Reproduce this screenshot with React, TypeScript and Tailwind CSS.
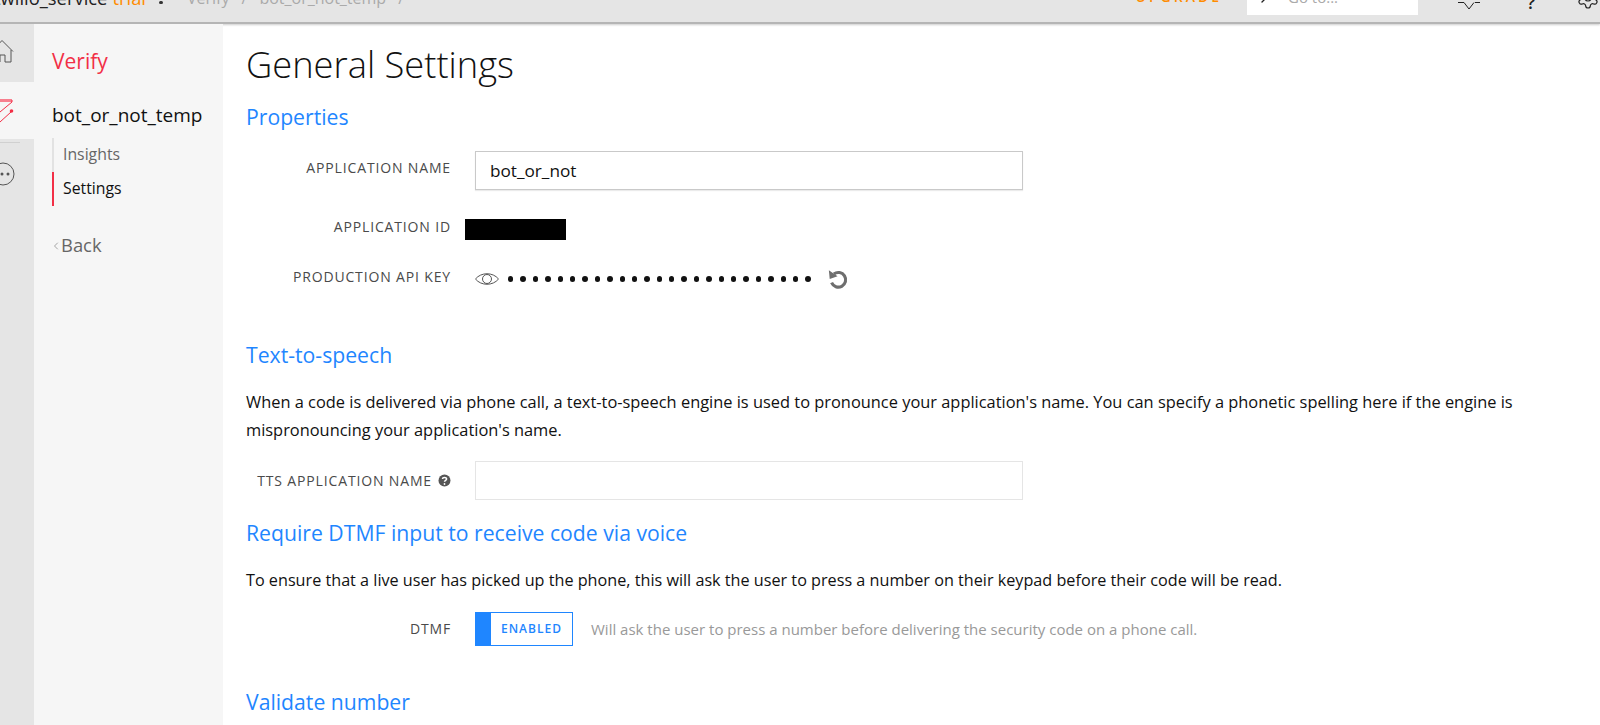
import { ChevronLeft, ChevronRight, Settings } from "lucide-react";

const font = "font-['Open_Sans',sans-serif]";

function FieldLabel({ children, raised }: { children: React.ReactNode; raised?: boolean }) {
  return (
    <div className={`w-[451px] shrink-0 text-right text-[14px] leading-[18px] tracking-[0.85px] text-[#4a4a4a] uppercase ${raised ? "-mt-[5px]" : ""}`}>
      {children}
    </div>
  );
}

function SectionTitle({ children, className }: { children: React.ReactNode; className: string }) {
  return <h2 className={`text-[21.2px] leading-[28px] text-[#1f86ff] ${className}`}>{children}</h2>;
}

export default function App() {
  return (
    <div className={`${font} flex h-[725px] w-[1600px] flex-col overflow-hidden bg-white text-black`}>
      {/* Top bar, cut off by the screenshot */}
      <header className="flex h-[24px] shrink-0 items-start overflow-hidden border-b-[2px] border-[#b5b5b5] bg-[#e5e5e5] shadow-[0_1px_2px_rgba(0,0,0,0.2)]">
        <span className="-mt-[14px] -ml-[6px] text-[18.4px] leading-[24px] text-[#222]">twilio_service</span>
        <span className="-mt-[14px] ml-[5px] text-[18.4px] leading-[24px] text-[#ff8c00]">trial</span>
        <span className="mt-[1px] ml-[13px] h-[3px] w-[4px] rounded-full bg-[#333]" />
        <span className="-mt-[14px] ml-[24px] text-[16px] leading-[24px] text-[#aaa]">Verify</span>
        <span className="-mt-[14px] ml-[12px] text-[16px] leading-[24px] text-[#aaa]">/</span>
        <span className="-mt-[14px] ml-[12px] text-[16px] leading-[24px] text-[#aaa]">bot_or_not_temp</span>
        <span className="-mt-[14px] ml-[12px] text-[16px] leading-[24px] text-[#aaa]">/</span>
        <span className="-mt-[15px] ml-auto text-[14px] leading-[24px] font-semibold tracking-[3px] text-[#ff8c00]">UPGRADE</span>
        <div className="ml-[25px] flex h-[15px] w-[171px] shrink-0 items-start overflow-hidden bg-white pl-[9px]">
          <ChevronRight className="-mt-[10px] h-4 w-4 text-[#222]" />
          <span className="-mt-[15px] ml-[16px] text-[15px] leading-[24px] text-[#aaa]">Go to...</span>
        </div>
        <svg className="ml-[39px] h-[12px] w-[24px] shrink-0" viewBox="0 0 24 12" fill="none" stroke="#222" strokeWidth="1">
          <path d="M1 2.5h6M18 2.5h5M7 2.5l5 6.5 5-6.5" />
        </svg>
        <span className="-mt-[10px] ml-[46px] w-[10px] shrink-0 text-[18px] leading-[24px] font-semibold text-[#222]">?</span>
        <Settings className="-mt-[14px] ml-[39px] h-[24px] w-[24px] shrink-0 text-[#222]" strokeWidth={1.2} />
      </header>

      <div className="flex min-h-0 flex-1">
        {/* Icon rail */}
        <nav className="flex w-[34px] shrink-0 flex-col bg-[#e5e5e5]">
          <div className="h-[58px] overflow-hidden">
            <svg className="mt-[15px] h-[26px] w-[16px]" viewBox="0 0 16 26" fill="none" stroke="#555" strokeWidth="1">
              <path d="M-8 12L2 1.5L13 12.5M11 11V23H5V16H0V23" />
            </svg>
          </div>
          <div className="h-[57px] overflow-hidden bg-[#f6f6f6]">
            <svg className="mt-[17px] h-[26px] w-[16px]" viewBox="0 0 16 26" fill="none" stroke="#f22f46" strokeWidth="1">
              <path d="M0 1.5H12" stroke="#f77f8e" strokeWidth="3" />
              <path d="M12 1V3L0 13" />
              <path d="M11 13L0 23" />
              <circle cx="11.5" cy="12" r="1.8" fill="#f22f46" stroke="none" />
            </svg>
          </div>
          <div className="mt-[3px] h-px w-[20px] bg-[#d0d0d0]" />
          <svg className="mt-[18px] h-[26px] w-[15px]" viewBox="0 0 15 26" fill="none" stroke="#555" strokeWidth="1">
            <circle cx="3" cy="13" r="11" />
            <circle cx="2" cy="13" r="1.5" fill="#555" stroke="none" />
            <circle cx="8" cy="13" r="1.5" fill="#555" stroke="none" />
          </svg>
        </nav>

        {/* Product sidebar */}
        <aside className="w-[189px] shrink-0 bg-[#f6f6f6] pl-[18px]">
          <div className="mt-[21px] text-[21px] leading-[32px] text-[#f22f46]">Verify</div>
          <div className="mt-[25px] text-[19px] leading-[26px] text-[#111]">bot_or_not_temp</div>
          <div className="mt-[10px] w-[120px]">
            <div className="flex h-[34px] items-center border-l-2 border-[#e2e2e2] pl-[9px] text-[15.8px] text-[#666]">Insights</div>
            <div className="flex h-[34px] items-center border-l-2 border-[#f22f46] pl-[9px] text-[15.8px] text-[#111]">Settings</div>
          </div>
          <div className="mt-[25px] flex items-center text-[#666]">
            <ChevronLeft className="-ml-[2px] mt-[2px] h-[12px] w-[12px] text-[#888]" strokeWidth={1.5} />
            <span className="-ml-[1px] text-[18.4px] leading-[28px]">Back</span>
          </div>
        </aside>

        {/* Page content */}
        <main className="min-w-0 flex-1 -ml-[223px]">
          <div className="pl-[246px]">
            <h1 className="mt-[15px] text-[36.3px] leading-[50px] font-light text-[#111]">General Settings</h1>
            <SectionTitle className="mt-[14px]">Properties</SectionTitle>
          </div>

          <div>
            <div className="mt-[20px] flex items-center">
              <FieldLabel raised>Application Name</FieldLabel>
              <div className="ml-[24px] flex h-[39px] w-[548px] items-center border border-[#c9c9c9] pl-[14px] text-[17.2px] text-[#111] shadow-[0_1px_1px_rgba(0,0,0,0.08)]">
                bot_or_not
              </div>
            </div>
            <div className="mt-[29px] flex h-[21px] items-center">
              <FieldLabel raised>Application ID</FieldLabel>
              <div className="ml-[14px] h-[21px] w-[101px] bg-black" />
            </div>
            <div className="mt-[27px] flex items-center">
              <FieldLabel raised>Production API Key</FieldLabel>
              <svg className="ml-[24px] h-[24px] w-[24px]" viewBox="0 0 24 24" fill="none" stroke="#555" strokeWidth="1">
                <path d="M0.5 12C6 5 18 5 23.5 12C18 19 6 19 0.5 12Z" />
                <circle cx="12" cy="12" r="4.5" />
              </svg>
              <div className="ml-[9px] flex gap-[7px]">
                {Array.from({ length: 25 }).map((_, i) => (
                  <span key={i} className="h-[5.4px] w-[5.4px] rounded-full bg-[#111]" />
                ))}
              </div>
              <svg className="ml-[16px] h-[22px] w-[22px]" viewBox="0 0 24 24" fill="none">
                <path d="M7.5 6.5A8 8 0 1 1 5 16" stroke="#6e6e6e" strokeWidth="3.4" />
                <path d="M2 2.5L3 12L11.5 9Z" fill="#6e6e6e" />
              </svg>
            </div>
          </div>

          <div className="pl-[246px]">
            <SectionTitle className="mt-[50px]">Text-to-speech</SectionTitle>
            <p className="mt-[19px] w-[1290px] text-[16.4px] leading-[28px] text-[#111]">
              When a code is delivered via phone call, a text-to-speech engine is used to pronounce your application's name. You can specify a phonetic spelling here if the engine is mispronouncing your application's name.
            </p>
          </div>

          <div className="mt-[17px] flex items-center">
            <FieldLabel>
              <span className="inline-flex items-center">
                TTS Application Name
                <svg className="ml-[6px] h-[13px] w-[13px]" viewBox="0 0 13 13">
                  <circle cx="6.5" cy="6.5" r="6" fill="#555" />
                  <path d="M4.4 5C4.6 2.9 8.6 2.9 8.6 5C8.6 6.3 6.5 6.3 6.5 7.8" fill="none" stroke="#fff" strokeWidth="1.5" />
                  <circle cx="6.5" cy="10" r="0.9" fill="#fff" />
                </svg>
              </span>
            </FieldLabel>
            <div className="ml-[24px] h-[39px] w-[548px] border border-[#e5e5e5]" />
          </div>

          <div className="pl-[246px]">
            <SectionTitle className="mt-[19px]">Require DTMF input to receive code via voice</SectionTitle>
            <p className="mt-[19px] text-[16.2px] leading-[28px] text-[#111]">
              To ensure that a live user has picked up the phone, this will ask the user to press a number on their keypad before their code will be read.
            </p>
          </div>

          <div className="mt-[18px] flex items-center">
            <FieldLabel>DTMF</FieldLabel>
            <div className="ml-[24px] flex h-[34px] w-[98px] border border-[#1f86ff]">
              <div className="w-[15px] bg-[#1f86ff]" />
              <div className="flex flex-1 items-center justify-center text-[12px] font-semibold tracking-[1px] text-[#1f86ff]">ENABLED</div>
            </div>
            <span className="ml-[18px] text-[15px] text-[#999]">Will ask the user to press a number before delivering the security code on a phone call.</span>
          </div>

          <div className="pl-[246px]">
            <SectionTitle className="mt-[42px]">Validate number</SectionTitle>
          </div>
        </main>
      </div>
    </div>
  );
}
